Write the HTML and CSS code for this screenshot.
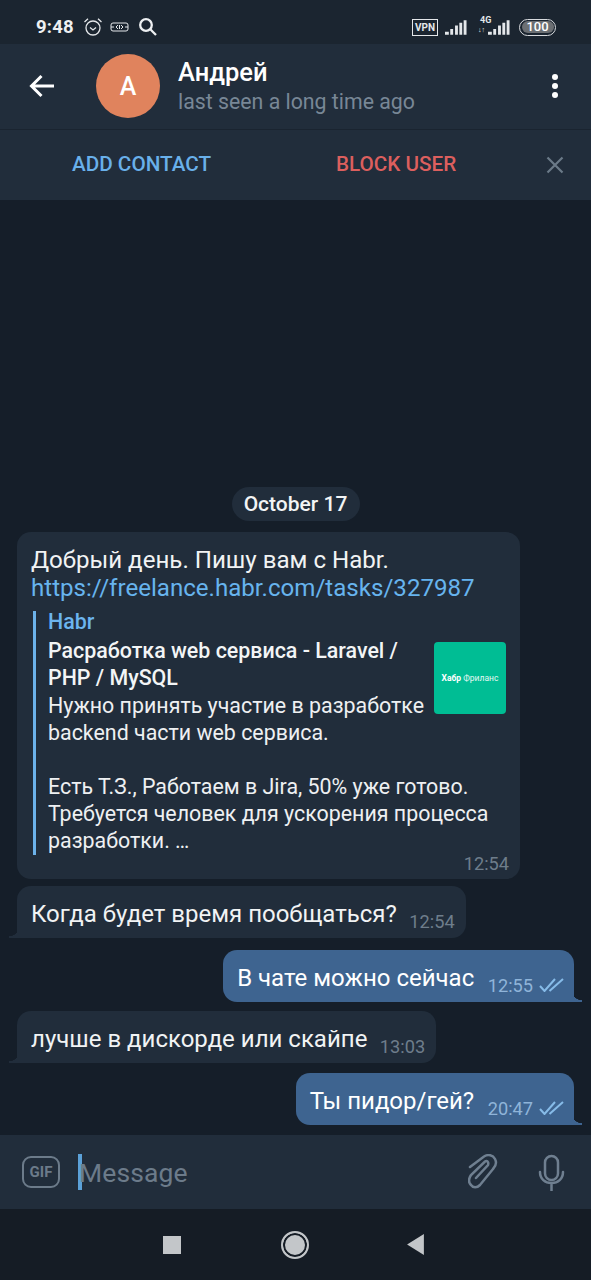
FILE: index.html
```html
<!DOCTYPE html>
<html lang="ru">
<head>
<meta charset="utf-8">
<title>Андрей</title>
<link rel="stylesheet" href="styles.css">
</head>
<body>
<div class="phone">
  <div class="status">
    <div class="status-left">
      <span class="clock">9:48</span>
      <svg class="i-alarm" width="20" height="20" viewBox="0 0 20 20" fill="none" stroke="#e4e7ea" stroke-width="1.3"><circle cx="10" cy="11" r="7"/><path d="M7 10.500l3 2.500 3-2.500M1.500 5L5 1.800M18.500 5L15 1.800"/></svg>
      <svg class="i-nfc" width="19" height="10" viewBox="0 0 19 10" fill="none" stroke="#e4e7ea" stroke-width="1"><rect x="1" y="1" width="17" height="8" rx="2"/><path d="M8 3L6 5l2 2M11 3l2 2-2 2M9.500 3v4M1 5h3M15 5h3"/></svg>
      <svg class="i-search" width="20" height="20" viewBox="0 0 20 20" fill="none" stroke="#eef0f2" stroke-width="2.300"><circle cx="8" cy="8" r="5.800"/><path d="M12.300 12.300L18 18"/></svg>
    </div>
    <div class="status-right">
      <span class="vpn">VPN</span>
      <svg width="22" height="16" viewBox="0 0 23 16" fill="#e4e7ea"><path d="M0 13h4v3H0zM5.500 10h3v6h-3zM10.500 6.500h3V16h-3zM15 3.500h3V16h-3zM19.500 1h3v15h-3z"/></svg>
      <span class="net"><span class="net-label">4G</span><span class="net-arrows">↓↑</span></span>
      <svg width="22" height="16" viewBox="0 0 23 16" fill="#e4e7ea"><path d="M0 13h4v3H0zM5.500 10h3v6h-3zM10.500 6.500h3V16h-3zM15 3.500h3V16h-3zM19.500 1h3v15h-3z"/></svg>
      <span class="battery"><span class="battery-in">100</span></span>
    </div>
  </div>

  <header class="head">
    <svg class="back" width="26" height="24" viewBox="0 0 26 24" fill="none" stroke="#fff" stroke-width="3"><path d="M25 12H3M12.500 2L2.500 12l10 10"/></svg>
    <div class="avatar">A</div>
    <div class="who">
      <div class="name">Андрей</div>
      <div class="seen">last seen a long time ago</div>
    </div>
    <div class="dots"><i></i><i></i><i></i></div>
  </header>

  <div class="actions">
    <span class="act add">ADD CONTACT</span>
    <span class="act block">BLOCK USER</span>
    <svg class="close" width="18" height="18" viewBox="0 0 18 18" stroke="#6b7a88" stroke-width="2.200"><path d="M1.500 1.500l15 15M16.500 1.500l-15 15"/></svg>
  </div>

  <main class="chat">
    <div class="date"><span>October 17</span></div>

    <div class="msg in first">
      <div class="text">Добрый день. Пишу вам с Habr.<br><span class="link">https://freelance.habr.com/tasks/327987</span></div>
      <div class="preview">
        <div class="site">Habr</div>
        <div class="thumb"><b>Хабр</b>&nbsp;Фриланс</div>
        <div class="p-title">Расработка web сервиса - Laravel / PHP / MySQL</div>
        <div class="p-body">Нужно принять участие в разработке backend части web сервиса.<br><br>Есть Т.З., Работаем в Jira, 50% уже готово. Требуется человек для ускорения процесса разработки. …</div>
      </div>
      <span class="time block-time">12:54</span>
    </div>

    <div class="msg in tail gap7">
      <span class="text">Когда будет время пообщаться?</span><span class="time">12:54</span>
    </div>

    <div class="msg out tail gap12">
      <span class="text">В чате можно сейчас</span><span class="time">12:55</span>
      <svg class="ticks" width="25" height="14" viewBox="0 0 25 14" fill="none" stroke="#86bbe8" stroke-width="2"><path d="M1 8l4.500 5L16 1M10.500 13L24 1"/></svg>
    </div>

    <div class="msg in tail gap9">
      <span class="text">лучше в дискорде или скайпе</span><span class="time">13:03</span>
    </div>

    <div class="msg out tail gap10">
      <span class="text">Ты пидор/гей?</span><span class="time">20:47</span>
      <svg class="ticks" width="25" height="14" viewBox="0 0 25 14" fill="none" stroke="#86bbe8" stroke-width="2"><path d="M1 8l4.500 5L16 1M10.500 13L24 1"/></svg>
    </div>
  </main>

  <div class="input">
    <span class="gif">GIF</span>
    <span class="caret"></span>
    <span class="placeholder">Message</span>
    <svg class="clip" width="30" height="36" viewBox="0 0 30 36" fill="none" stroke="#6f7f90" stroke-width="2.500" stroke-linecap="round"><path d="M2 13L16 2.500C20 0 25 1 27 5c2 4 1 7-2 10L12 31c-3 3-7 3-9 0-3-3-2-7 0-10L17 7.500c2-1.500 4 .5 3 3.500L8 24"/></svg>
    <svg class="mic" width="28" height="38" viewBox="0 0 28 38" fill="none" stroke="#6f7f90" stroke-width="2.500" stroke-linecap="round"><rect x="8" y="3" width="13" height="24" rx="6.500"/><path d="M3 19c0 7 5 11 11.500 11S26 26 26 19M14.500 30v8"/></svg>
  </div>

  <nav class="nav">
    <span class="n-square"></span>
    <span class="n-home"></span>
    <svg class="n-back" width="19" height="21" viewBox="0 0 18 20"><path d="M17 0v20L1 10z" fill="#c3c6c9"/></svg>
  </nav>
</div>
</body>
</html>
```

FILE: styles.css
```css
* { box-sizing: border-box; }
html, body { margin: 0; padding: 0; }
body { background: #151e29; font-family: Roboto, "Noto Sans", sans-serif; color: #fff; }
.phone { width: 591px; height: 1280px; display: flex; flex-direction: column; overflow: hidden; }

.status { height: 44px; flex: none; background: #1b2530; display: flex; align-items: center; justify-content: space-between; padding: 10px 35px 0 36px; }
.status-left, .status-right { display: flex; align-items: center; }
.clock { font-size: 18.500px; font-weight: 700; color: #eef0f2; width: 47px; letter-spacing: .2px; }
.i-alarm { margin-right: 7px; }
.i-nfc { margin-right: 9px; }
.vpn { border: 1.500px solid #e4e7ea; font-size: 10px; font-weight: 700; height: 17px; width: 26px; display: flex; align-items: center; justify-content: center; color: #e4e7ea; margin-right: 7px; }
.net { width: 9px; margin-left: 12px; height: 18px; position: relative; font-size: 8px; color: #e4e7ea; }
.net-label { position: absolute; left: 1px; top: -3px; font-weight: 700; font-size: 9px; }
.net-arrows { position: absolute; left: -1px; top: 8px; font-size: 7px; }
.battery { margin-left: 9px; width: 37px; height: 17px; border: 1.500px solid #d8dbde; border-radius: 9px; padding: 1.500px; display: flex; }
.battery-in { flex: 1; background: #6b6f73; border-radius: 7px; font-size: 13px; line-height: 11px; text-align: center; font-weight: 500; color: #fff; }

.head { height: 85px; flex: none; background: #212d3b; display: flex; align-items: center; padding: 0 0 1px 29px; position: relative; }
.back { flex: none; margin-right: 41px; }
.avatar { width: 64px; height: 64px; flex: none; border-radius: 50%; background: #e0835d; font-size: 25px; font-weight: 500; display: flex; align-items: center; justify-content: center; margin-right: 18px; }
.who { flex: 1; padding-top: 1px; }
.name { font-size: 25.500px; font-weight: 500; line-height: 30px; color: #fff; }
.seen { font-size: 21.300px; line-height: 29px; color: #788796; }
.dots { width: 6px; margin-right: 33px; display: flex; flex-direction: column; gap: 3px; }
.dots i { width: 6px; height: 6px; border-radius: 50%; background: #fff; display: block; }

.actions { height: 71px; flex: none; background: #212d3b; border-top: 1px solid #1a2430; display: flex; align-items: center; font-size: 20.700px; font-weight: 500; position: relative; }
.act { position: absolute; top: 22px; line-height: 24px; }
.add { left: 72px; color: #69b0ea; }
.block { left: 336px; color: #dc5f5e; }
.close { position: absolute; left: 546px; top: 26px; }

.chat { flex: 1; background: #151e29; display: flex; flex-direction: column; align-items: stretch; justify-content: flex-end; padding: 0 17px 10px; min-height: 0; }
.date { display: flex; justify-content: center; margin-bottom: 11px; }
.date span { background: #212d3b; border-radius: 17px; height: 34px; width: 128px; display: flex; align-items: center; justify-content: center; font-size: 21px; font-weight: 500; color: #f2f4f5; }

.msg { position: relative; background: #212d3b; border-radius: 14px; font-size: 24px; line-height: 28px; color: #f1f3f4; padding: 14px 14px 0; width: fit-content; height: 52px; display: flex; align-items: flex-start; }
.msg.first { display: block; width: 503px; height: 347px; font-size: 24.100px; }
.msg.in { align-self: flex-start; }
.msg.out { align-self: flex-end; background: #3e6490; color: #fff; }
.msg.tail.in { border-bottom-left-radius: 0; }
.msg.tail.out { border-bottom-right-radius: 0; }
.msg.tail::after { content: ""; position: absolute; bottom: 0; width: 10px; height: 12px; }
.msg.in.tail::after { left: -8px; background: radial-gradient(circle at 0 0, transparent 10px, #212d3b 10.500px); }
.msg.out.tail::after { right: -8px; background: radial-gradient(circle at 100% 0, transparent 10px, #3e6490 10.500px); }
.gap7 { margin-top: 7px; }
.gap9 { margin-top: 9px; }
.gap10 { margin-top: 10px; }
.gap12 { margin-top: 12px; }

.link { color: #67b4ee; }
.preview { position: relative; margin-top: 9px; margin-left: 2px; padding-left: 12px; border-left: 3px solid #6cb2ea; height: 244px; }
.site { color: #6cb5ef; font-weight: 500; font-size: 21.400px; line-height: 22px; }
.thumb { float: right; width: 72px; height: 72px; margin: 9px 0 0 9px; background: #00bd94; border-radius: 4px; font-size: 8.500px; display: flex; align-items: center; justify-content: center; color: #e4f8f3; }
.thumb b { color: #fff; }
.p-title { font-weight: 500; color: #f3f5f6; font-size: 21.400px; line-height: 27px; margin-top: 4px; }
.p-body { color: #eef0f2; font-size: 21.400px; line-height: 27px; margin-top: 1px; }

.time { font-size: 18.200px; line-height: 20px; color: #6e7d8b; margin-left: 12.500px; margin-top: 12px; margin-right: -3px; }
.block-time { position: absolute; right: 11px; bottom: 5px; margin: 0; }
.msg.out .time { color: #8fb4d9; margin-left: 13.500px; margin-right: 0; }
.ticks { margin-left: 6px; margin-top: 14px; margin-right: -4px; flex: none; }

.input { height: 74px; flex: none; background: #212d3b; display: flex; align-items: center; padding-left: 20px; position: relative; }
.gif { width: 38px; height: 32px; border: 2.500px solid #6c7b8a; border-radius: 9px; color: #6c7b8a; font-size: 15px; font-weight: 700; display: flex; align-items: center; justify-content: center; margin: 0 0 0 2px; }
.caret { width: 4px; height: 36px; background: #5ba1d8; margin-left: 18px; }
.placeholder { font-size: 26.500px; color: #6c7b8a; margin-left: -3px; flex: 1; letter-spacing: .1px; }
.clip { margin-right: 39px; }
.mic { margin-right: 26px; }

.nav { height: 71px; flex: none; background: #151c25; display: flex; align-items: center; position: relative; padding: 0 0 0 163px; }
.n-square { width: 18px; height: 18px; background: #c3c6c9; }
.n-home { width: 28px; height: 28px; margin-left: 100px; border-radius: 50%; background: #c3c6c9; border: 2px solid #c3c6c9; box-shadow: inset 0 0 0 2px #151c25; }
.n-back { margin-left: 97px; }
```
